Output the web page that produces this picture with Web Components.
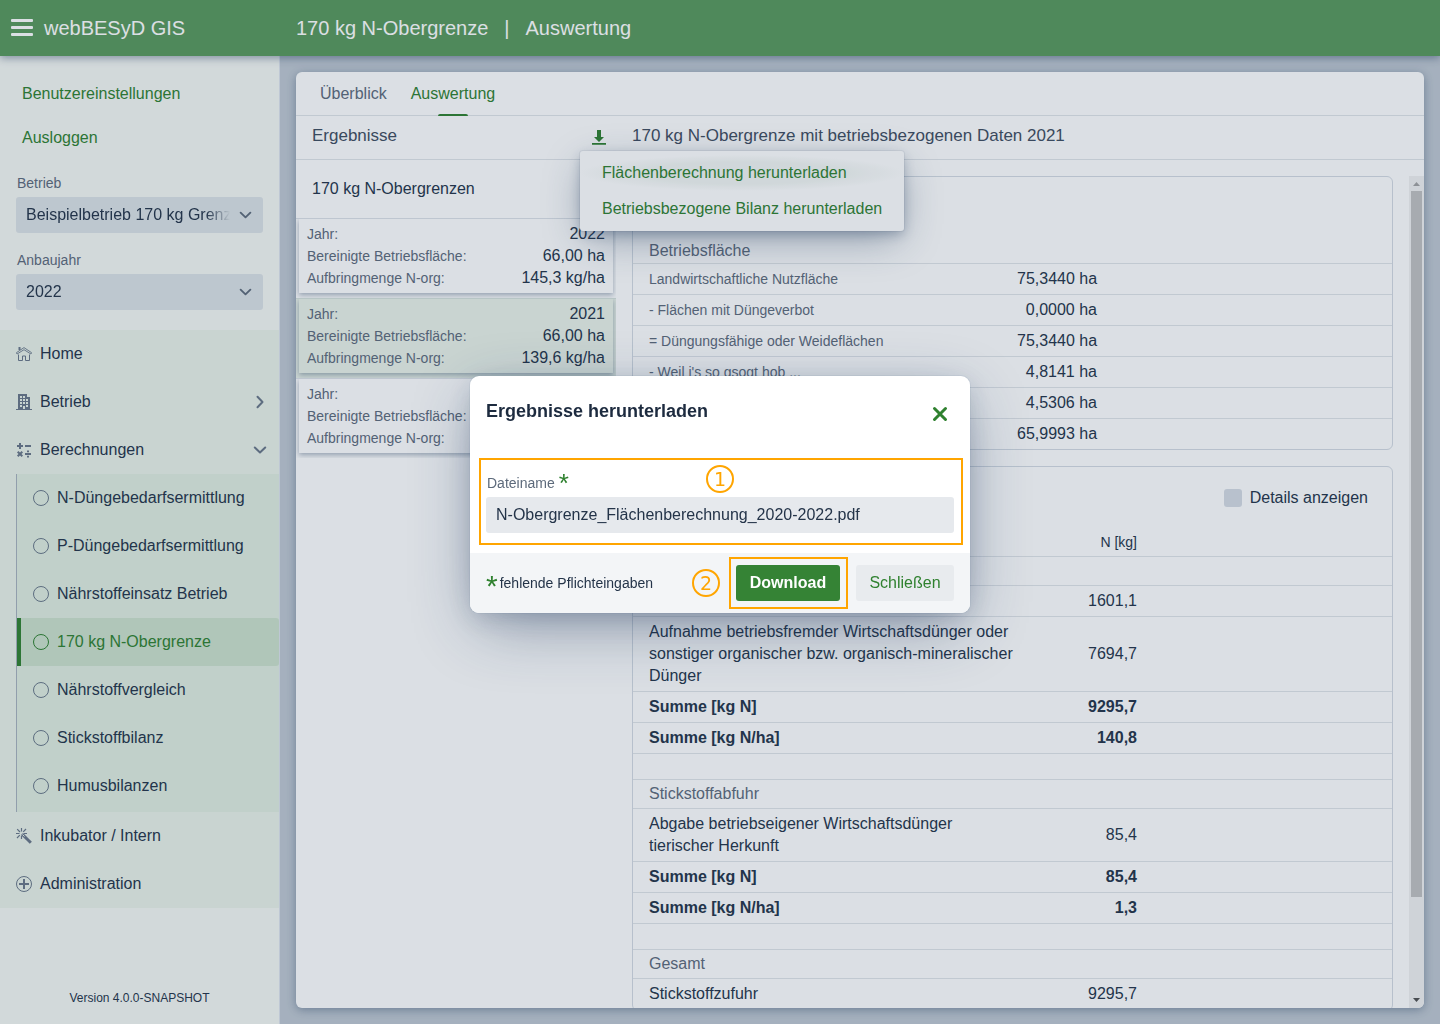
<!DOCTYPE html>
<html lang="de">
<head>
<meta charset="utf-8">
<title>webBESyD GIS</title>
<meta name="viewport" content="width=device-width, initial-scale=1">
<style>
  html, body { height: 100%; margin: 0; }
  body {
    --primary: #2f812f;
    --body: #243449;
    --secondary: #5d6a7b;
    --line: #e1e5e9;
    --frame: #d4dbe3;
    --mark: #ffa500;
    font-family: "Liberation Sans", Arial, sans-serif;
    font-size: 16px;
    line-height: 22px;
    color: var(--body);
    overflow: hidden;
  }
</style>
</head>
<body>
<besyd-app></besyd-app>

<script>
const define = (name, html, setup) => {
  const template = document.createElement('template');
  template.innerHTML = html;
  customElements.define(name, class extends HTMLElement {
    connectedCallback() {
      if (this.shadowRoot) return;
      const root = this.attachShadow({ mode: 'open' });
      root.append(template.content.cloneNode(true));
      if (setup) setup(this, root);
    }
  });
};

const ICONS = {
  home: '<path d="M2.500 8.500v6h4V10h3v4.500h4v-6"/><path d="M.4 6.700 8 1.600l7.600 5.100-.7 1.300L8 3.700 1.100 8z" stroke-width=".9"/><path d="M3.500 1v3" stroke-width="2"/>',
  building: '<path fill="currentColor" stroke="none" fill-rule="evenodd" d="M2 0h9v3h3v12h2v1H0v-1h2zM4 2v2h2V2zm3 0v2h2V2zM4 5v2h2V5zm3 0v2h2V5zm3 0v2h2V5zM4 8v2h2V8zm3 0v2h2V8zm3 0v2h2V8zM4 11v2h2v-2zm6 0v2h2v-2zM7 12v3h2v-3z"/>',
  calc: '<path stroke-width="2" d="M1 4h6M4 1v6M9 4h6M9 12h6M1.700 9.700l4.600 4.600M6.300 9.700l-4.600 4.600"/><path fill="currentColor" stroke="none" d="M11 8.500h2v1.800h-2zM11 13.700h2v1.800h-2z"/>',
  magic: '<path stroke-width="1.200" d="M5.500 0v3.500M0 5.500h3.500M1.200 1.200l2.800 2.800M10 1 7.200 3.800M1 10l2.800-2.800M5.500 8v3M8 5.500h3"/><path stroke-width="3" d="M6 6l8.800 8.800"/><path stroke="#eaf2e9" stroke-width="1" d="M6.500 6.500l2 2"/>',
  plus: '<circle cx="8" cy="8" r="7.500"/><path stroke-width="2" d="M8 3v10M3 8h10"/>',
  circle: '<circle cx="8" cy="8" r="7.500"/>',
  down: '<path stroke-width="2" stroke-linecap="round" stroke-linejoin="round" d="M2.800 5.500 8 10.500l5.200-5"/>',
  right: '<path stroke-width="2" stroke-linecap="round" stroke-linejoin="round" d="M5.500 2.800l5 5.200-5 5.200"/>',
  download: '<path fill="currentColor" stroke="none" d="M6 1h4v7h3l-5 5-5-5h3zM1 14h14v1.800H1z"/>',
  close: '<path stroke-width="3" stroke-linecap="round" d="M2.500 2.500l11 11M13.500 2.500l-11 11"/>'
};

define('b-icon', `
  <style>
    :host { display: inline-flex; flex: none; width: 16px; height: 16px; }
    svg { width: 100%; height: 100%; fill: none; stroke: currentColor; }
  </style>
  <svg viewBox="0 0 16 16" aria-hidden="true"></svg>`,
  (host, root) => { root.querySelector('svg').innerHTML = ICONS[host.getAttribute('name')]; });

define('besyd-header', `
  <style>
    :host { display: flex; align-items: center; height: 56px; position: relative; z-index: 2;
      background: #59995c; color: #fff; font-size: 20px;
      box-shadow: 0 2px 8px rgba(28, 54, 90, .45); }
    .brand { display: flex; align-items: center; gap: 11px; flex: none; width: 285px; padding-left: 11px; }
    button { display: grid; gap: 4px; width: 22px; padding: 0 0 1px; border: 0; background: none; }
    i { height: 3px; border-radius: 1px; background: #fff; }
    .crumbs { display: flex; gap: 16px; }
  </style>
  <div class="brand"><button aria-label="Menü"><i></i><i></i><i></i></button><span>webBESyD GIS</span></div>
  <div class="crumbs"><span>170 kg N-Obergrenze</span><span>|</span><span>Auswertung</span></div>`);

define('b-select', `
  <style>
    :host { display: block; }
    label { display: block; font-size: 14px; line-height: 20px; padding: 0 1px 4px; color: var(--secondary); }
    .box { display: flex; align-items: center; height: 36px; border-radius: 3px; background: #dce3e6; }
    select { flex: 1; min-width: 0; height: 36px; padding: 0 0 1px 10px; border: 0; appearance: none;
      background: none; font: inherit; color: inherit; text-overflow: clip;
      -webkit-mask-image: linear-gradient(to left, transparent, #000 24px); mask-image: linear-gradient(to left, transparent, #000 24px); }
    b-icon { margin: 0 10px 0 8px; color: var(--secondary); pointer-events: none; width: 15px; }
  </style>
  <label for="s"></label>
  <div class="box"><select id="s"><option></option></select><b-icon name="down"></b-icon></div>`,
  (host, root) => {
    root.querySelector('label').textContent = host.getAttribute('label');
    root.querySelector('option').textContent = host.getAttribute('value');
  });

define('nav-item', `
  <style>
    :host { display: block; }
    a { display: flex; align-items: center; gap: 8px; height: 48px; padding: 0 11px 0 16px;
      color: var(--body); text-decoration: none; box-sizing: border-box; }
    b-icon { color: #697788; }
    .end { margin-left: auto; }
    :host([current]) a { color: var(--primary); background: #cce2cc; border-radius: 0 3px 3px 0;
      border-left: 4px solid var(--primary); padding-left: 12px; }
    :host([current]) b-icon { color: inherit; }
  </style>
  <a href="#"><slot></slot></a>`,
  (host, root) => {
    const add = (name, end) => {
      const icon = document.createElement('b-icon');
      icon.setAttribute('name', name);
      if (end) icon.className = 'end';
      root.querySelector('a')[end ? 'append' : 'prepend'](icon);
    };
    add(host.getAttribute('icon'));
    if (host.hasAttribute('toggle')) add(host.getAttribute('toggle'), true);
  });

define('besyd-sidebar', `
  <style>
    :host { display: flex; flex-direction: column; flex: none; width: 280px; box-sizing: border-box;
      background: #f5f8f4; border-right: 1px solid #dde3ec; }
    .user { display: grid; justify-items: start; gap: 8px; padding: 20px 16px 17px; }
    .user button { height: 36px; padding: 0 6px; border: 0; background: none; font: inherit; color: var(--primary); }
    .fields { display: grid; grid-template-columns: minmax(0, 1fr); gap: 17px; padding: 0 16px 20px; }
    nav { background: #eaf2e9; }
    .sub { margin-left: 16px; border-left: 1px solid #a7b2bd; background: #e0eee0; padding-bottom: 2px; }
    footer { margin-top: auto; padding: 0 0 15px; text-align: center; font-size: 12px; }
  </style>
  <div class="user"><button>Benutzereinstellungen</button><button>Ausloggen</button></div>
  <div class="fields">
    <b-select label="Betrieb" value="Beispielbetrieb 170 kg Grenz"></b-select>
    <b-select label="Anbaujahr" value="2022"></b-select>
  </div>
  <nav>
    <nav-item icon="home">Home</nav-item>
    <nav-item icon="building" toggle="right">Betrieb</nav-item>
    <nav-item icon="calc" toggle="down">Berechnungen</nav-item>
    <div class="sub">
      <nav-item icon="circle">N-Düngebedarfsermittlung</nav-item>
      <nav-item icon="circle">P-Düngebedarfsermittlung</nav-item>
      <nav-item icon="circle">Nährstoffeinsatz Betrieb</nav-item>
      <nav-item icon="circle" current>170 kg N-Obergrenze</nav-item>
      <nav-item icon="circle">Nährstoffvergleich</nav-item>
      <nav-item icon="circle">Stickstoffbilanz</nav-item>
      <nav-item icon="circle">Humusbilanzen</nav-item>
    </div>
    <nav-item icon="magic">Inkubator / Intern</nav-item>
    <nav-item icon="plus">Administration</nav-item>
  </nav>
  <footer>Version 4.0.0-SNAPSHOT</footer>`);

define('result-card', `
  <style>
    :host { display: block; height: 80px; box-sizing: border-box; border-top: 1px solid #dde2e8; overflow: hidden; }
    :host([selected]) { background: #eaf2e9; border-color: #d5e0da; }
    dl { display: grid; grid-template-columns: auto auto; margin: 0 3px; padding: 4px 8px;
      box-shadow: 0 2px 5px rgba(28, 54, 90, .38); }
    dt { font-size: 14px; color: var(--secondary); }
    dd { margin: 0; text-align: right; }
  </style>
  <dl>
    <dt>Jahr:</dt><dd><slot name="year"></slot></dd>
    <dt>Bereinigte Betriebsfläche:</dt><dd><slot name="area"></slot></dd>
    <dt>Aufbringmenge N-org:</dt><dd><slot name="amount"></slot></dd>
  </dl>`);

define('download-menu', `
  <style>
    :host { display: block; position: relative; }
    .open { display: flex; padding: 0; border: 0; background: none; color: var(--primary); margin-right: 9px; }
    .list { position: absolute; z-index: 1; top: 26px; left: -11px; padding: 4px 0; border-radius: 3px; background: #fff;
      box-shadow: 0 0 0 1px rgba(28, 54, 90, .06), 0 4px 12px -1px rgba(28, 54, 90, .3), 0 12px 40px -5px rgba(28, 54, 90, .4); }
    .list button { display: block; height: 36px; padding: 0 22px 1px; border: 0; background: none;
      font: inherit; color: var(--primary); white-space: nowrap; text-align: left; }
    .list button:first-child { background: radial-gradient(closest-side, #f2f6f3 60%, #fff); width: 100%; }
  </style>
  <button class="open" aria-label="Herunterladen"><b-icon name="download"></b-icon></button>
  <div class="list">
    <button>Flächenberechnung herunterladen</button>
    <button>Betriebsbezogene Bilanz herunterladen</button>
  </div>`);

/* Rows are [label, value, kind]; kind is one of head, sum or gap. */
const TABLES = {
  area: [
    ['Landwirtschaftliche Nutzfläche', '75,3440 ha'],
    ['- Flächen mit Düngeverbot', '0,0000 ha'],
    ['= Düngungsfähige oder Weideflächen', '75,3440 ha'],
    ["- Weil i's so gsogt hob ...", '4,8141 ha'],
    ['', '4,5306 ha'],
    ['', '65,9993 ha']
  ],
  nitrogen: [
    ['', '', 'head'],
    ['', '1601,1'],
    ['Aufnahme betriebsfremder Wirtschaftsdünger oder sonstiger organischer bzw. organisch-mineralischer Dünger', '7694,7'],
    ['Summe [kg N]', '9295,7', 'sum'],
    ['Summe [kg N/ha]', '140,8', 'sum'],
    ['', '', 'gap'],
    ['Stickstoffabfuhr', '', 'head'],
    ['Abgabe betriebseigener Wirtschaftsdünger tierischer Herkunft', '85,4'],
    ['Summe [kg N]', '85,4', 'sum'],
    ['Summe [kg N/ha]', '1,3', 'sum'],
    ['', '', 'gap'],
    ['Gesamt', '', 'head'],
    ['Stickstoffzufuhr', '9295,7']
  ]
};

define('data-table', `
  <style>
    :host { display: block; }
    table { width: 100%; table-layout: fixed; border-collapse: separate; border-spacing: 0; }
    th, td { padding: 4px 0; border-bottom: 1px solid var(--line); font-weight: 400; text-align: left; box-sizing: border-box; height: 31px; }
    tr > :first-child { padding-left: 16px; }
    tr > :nth-child(2) { text-align: right; white-space: nowrap; }
    :host([small]) tbody th { font-size: 14px; color: var(--secondary); }
    :host([small]) tbody tr:last-child > * { border-bottom: 0; height: 30px; }
    .head > * { height: 29px; padding-top: 3px; padding-bottom: 3px; color: var(--secondary); }
    .gap > * { height: 26px; padding-top: 0; padding-bottom: 0; }
    .sum > * { font-weight: 700; }
    thead > tr > * { font-size: 14px; height: 29px; padding-top: 3px; padding-bottom: 3px; }
    col.label { width: 384px; }
  </style>
  <table><colgroup><col class="label"><col class="value"><col></colgroup><thead></thead><tbody></tbody></table>`,
  (host, root) => {
    root.querySelector('.value').style.width = host.getAttribute('value-width');
    if (host.hasAttribute('unit')) {
      root.querySelector('thead').innerHTML = '<tr><th></th><th scope="col">' + host.getAttribute('unit') + '</th><th></th></tr>';
    }
    for (const [label, value, kind] of TABLES[host.getAttribute('rows')]) {
      const row = root.querySelector('tbody').insertRow();
      row.className = kind || '';
      const head = document.createElement('th');
      head.scope = 'row';
      head.textContent = label;
      row.append(head);
      row.insertCell().textContent = value;
      row.insertCell();
    }
  });

define('scroll-bar', `
  <style>
    :host { display: flex; flex-direction: column; flex: none; width: 15px; background: #f1f1f1; }
    svg { display: block; height: 15px; width: 15px; flex: none; }
    .track { flex: 1; padding: 0 2px; }
    .thumb { height: 88%; background: #c1c1c1; }
  </style>
  <svg viewBox="0 0 15 15"><path d="M4 10h7L7.500 6z" fill="#a3a3a3"/></svg>
  <div class="track"><div class="thumb"></div></div>
  <svg viewBox="0 0 15 15"><path d="M4 5h7L7.500 9z" fill="#505050"/></svg>`);

define('evaluation-panel', `
  <style>
    :host { display: flex; flex-direction: column; flex: 1; min-height: 0; background: #fff; border-radius: 6px; overflow: hidden; }
    .tabs { display: flex; gap: 24px; flex: none; height: 44px; padding: 0 24px; box-sizing: border-box; border-bottom: 1px solid var(--line); }
    .tabs a { display: flex; align-items: center; height: 44px; color: var(--secondary); text-decoration: none; position: relative; }
    .tabs a.on { color: var(--primary); }
    .tabs a.on::after { content: ""; position: absolute; bottom: 0; left: calc(50% - 15px); width: 30px; height: 2px;
      border-radius: 2px 2px 0 0; background: var(--primary); }
    .bar { display: flex; flex: none; height: 44px; box-sizing: border-box; border-bottom: 1px solid var(--line); font-size: 17px; }
    .bar > div { display: flex; justify-content: space-between; padding: 9px 0 0 16px; box-sizing: border-box; }
    .bar > .left { width: 320px; flex: none; }
    h2 { margin: 0; font-size: 17px; font-weight: 400; line-height: 22px; color: #3f4d60; }
    download-menu { font-size: 16px; padding-top: 4px; }
    .content { display: flex; flex: 1; min-height: 0; }
    .list { width: 320px; flex: none; }
    h3 { margin: 0; font-size: 16px; font-weight: 400; line-height: 22px; }
    .list h3 { padding: 18px 16px; }
    .view { display: flex; flex: 1; min-width: 0; padding: 16px 0 0 16px; }
    .scroll { flex: 1; min-width: 0; overflow: hidden; display: flex; flex-direction: column; gap: 16px; padding-right: 16px; }
    section { flex: none; border: 1px solid var(--frame); border-radius: 6px; overflow: hidden; }
    .title { display: flex; align-items: flex-end; height: 85px; padding: 0 16px 1px; border-bottom: 1px solid var(--line); color: var(--secondary); }
    .options { display: flex; justify-content: flex-end; padding: 20px 24px 19px; }
    label { display: flex; align-items: center; gap: 8px; }
    input { appearance: none; width: 18px; height: 18px; margin: 0; border-radius: 3px; background: #d6dce4; }
  </style>
  <div class="tabs"><a href="#">Überblick</a><a href="#" class="on">Auswertung</a></div>
  <div class="bar">
    <div class="left"><h2>Ergebnisse</h2><download-menu></download-menu></div>
    <div><h2>170 kg N-Obergrenze mit betriebsbezogenen Daten 2021</h2></div>
  </div>
  <div class="content">
    <div class="list">
      <h3>170 kg N-Obergrenzen</h3>
      <result-card><span slot="year">2022</span><span slot="area">66,00 ha</span><span slot="amount">145,3 kg/ha</span></result-card>
      <result-card selected><span slot="year">2021</span><span slot="area">66,00 ha</span><span slot="amount">139,6 kg/ha</span></result-card>
      <result-card></result-card>
    </div>
    <div class="view">
      <div class="scroll">
        <section>
          <h3 class="title">Betriebsfläche</h3>
          <data-table rows="area" value-width="80px" small></data-table>
        </section>
        <section>
          <div class="options"><label><input type="checkbox">Details anzeigen</label></div>
          <data-table rows="nitrogen" value-width="120px" unit="N [kg]"></data-table>
        </section>
      </div>
      <scroll-bar></scroll-bar>
    </div>
  </div>`);

define('step-mark', `
  <style>
    :host { display: flex; align-items: center; justify-content: center; width: 28px; height: 28px; box-sizing: border-box;
      border: 2px solid var(--mark); border-radius: 50%; color: var(--mark); font: 19px/24px "DejaVu Sans", sans-serif; }
  </style>
  <slot></slot>`);

define('download-dialog', `
  <style>
    :host { position: fixed; inset: 0; z-index: 10; display: flex; align-items: center; justify-content: center;
      padding-bottom: 35px; background: rgba(28, 54, 90, .16); }
    form { width: 500px; border-radius: 9px; background: #fff;
      box-shadow: 0 0 0 1px rgba(28, 54, 90, .05), 0 6px 24px -3px rgba(28, 54, 90, .2), 0 18px 64px -8px rgba(28, 54, 90, .45); }
    header { display: flex; justify-content: space-between; align-items: center; height: 82px; padding: 0 22px 6px 16px; box-sizing: border-box; }
    h2 { margin: 0; font-size: 18px; line-height: 22px; padding-bottom: 6px; color: #1d2b3f; }
    button { font: inherit; border: 0; border-radius: 3px; height: 36px; padding: 0 0 1px; }
    .close { display: flex; height: auto; padding: 0; background: none; color: var(--primary); }
    .field { position: relative; margin: 0 7px 8px 9px; padding: 13px 7px 10px 5px; border: 2px solid var(--mark); }
    label { display: flex; height: 24px; padding-left: 1px; gap: 4px; font-size: 14px; line-height: 20px; color: var(--secondary); }
    b { font-weight: 400; font-size: 26px; line-height: 30px; color: var(--primary); }
    label b { line-height: 20px; }
    input { display: block; width: 100%; height: 36px; box-sizing: border-box; border: 0; border-radius: 3px; padding: 0 10px 1px;
      background: #e6e9ed; font: inherit; color: inherit; }
    .field step-mark { position: absolute; top: 5px; left: 225px; }
    footer { display: flex; align-items: center; height: 60px; padding: 0 16px; border-radius: 0 0 9px 9px; background: #f3f5f7; }
    .hint { display: flex; align-items: center; gap: 2px; font-size: 14px; height: 22px; flex: 1; }
    .hint b { padding-top: 6px; font-size: 30px; }
    .frame { padding: 6px 6px 6px 5px; border: 2px solid var(--mark); margin: 0 8px 0 9px; }
    .primary { display: block; width: 104px; background: #358335; color: #fff; font-weight: 700; }
    .second { width: 98px; background: #e8ebee; color: var(--primary); }
  </style>
  <form role="dialog" aria-labelledby="t">
    <header><h2 id="t">Ergebnisse herunterladen</h2><button type="button" class="close" aria-label="Dialog schließen"><b-icon name="close"></b-icon></button></header>
    <div class="field">
      <label for="f">Dateiname <b>*</b></label>
      <input id="f" value="N-Obergrenze_Flächenberechnung_2020-2022.pdf">
      <step-mark>1</step-mark>
    </div>
    <footer>
      <div class="hint"><b>*</b><span>fehlende Pflichteingaben</span></div>
      <step-mark>2</step-mark>
      <div class="frame"><button type="button" class="primary">Download</button></div>
      <button type="button" class="second">Schließen</button>
    </footer>
  </form>`);

define('besyd-app', `
  <style>
    :host { display: flex; flex-direction: column; height: 100vh; }
    .body { display: flex; flex: 1; min-height: 0; }
    main { display: flex; flex-direction: column; flex: 1; min-width: 0; padding: 16px; box-sizing: border-box; background: #bfc8d2; }
    evaluation-panel { box-shadow: 0 2px 10px rgba(28, 54, 90, .4); }
  </style>
  <besyd-header></besyd-header>
  <div class="body"><besyd-sidebar></besyd-sidebar><main><evaluation-panel></evaluation-panel></main></div>
  <download-dialog></download-dialog>`);
</script>
</body>
</html>
